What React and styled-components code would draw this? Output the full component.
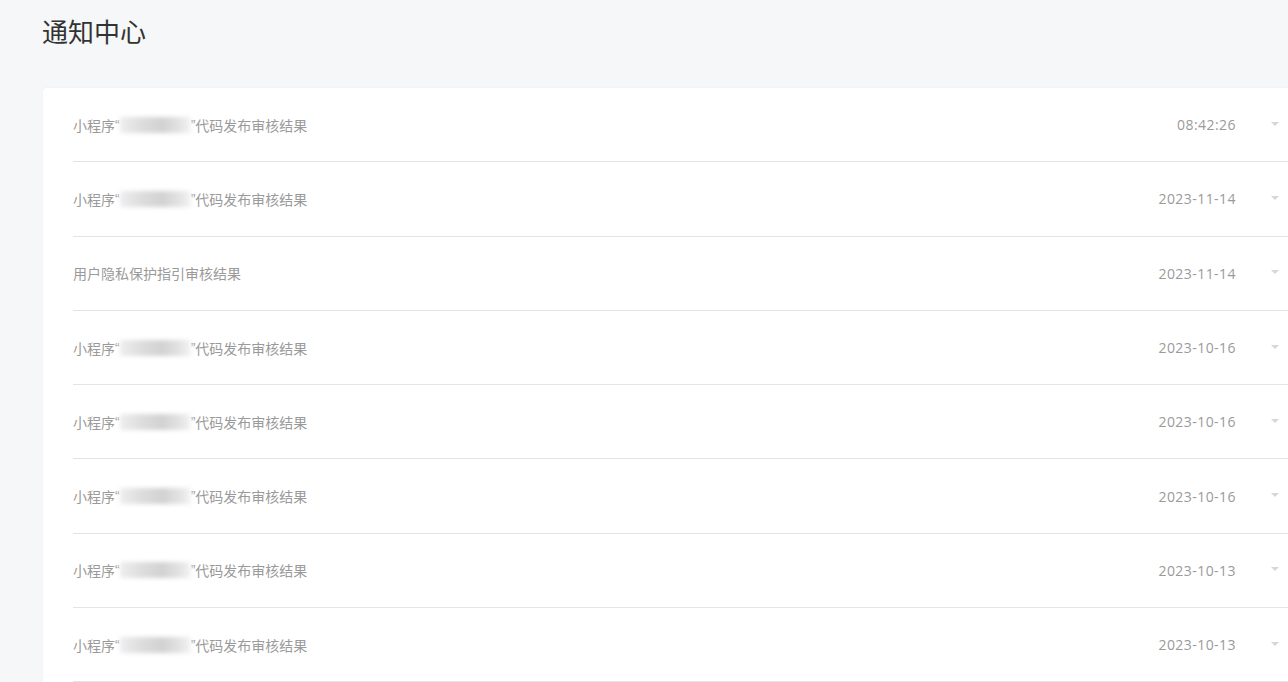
import React from 'react'
import styled, { createGlobalStyle } from 'styled-components'

const GlobalStyle = createGlobalStyle`
  html, body {
    margin: 0;
    padding: 0;
    background: #f6f7f9;
    overflow: hidden;
    font-family: "Noto Sans CJK SC", "Noto Sans", sans-serif;
  }
`

const Page = styled.div`
  padding: 15px 0 0 43px;
`

const Title = styled.h1`
  margin: 0 0 0 -1px;
  font-size: 26px;
  line-height: 32px;
  font-weight: 400;
  color: #333;
`

const Card = styled.div`
  margin-top: 41px;
  margin-right: -14px;
  background: #fff;
  border-radius: 4px 0 0 0;
  box-shadow: 0 0 3px rgba(0, 0, 0, 0.04);
  padding-left: 30px;
`

const Row = styled.div`
  display: flex;
  align-items: center;
  height: 73.3px;
  padding-right: 23px;
  border-bottom: 1px solid #e4e4e6;
  font-size: 14px;
  color: #9a9a9a;
`

const Subject = styled.div`
  flex: 1;
  display: flex;
  align-items: center;
`

const Quote = styled.span`
  font-family: "Liberation Sans", sans-serif;
`

const Blur = styled.span`
  display: inline-block;
  width: ${p => p.w}px;
  height: 16px;
  background: linear-gradient(90deg, #eee 0%, #ddd 30%, #d2d2d2 60%, #e4e4e4 85%, #f4f4f4 100%);
  filter: blur(2px);
`

const Time = styled.span`
  font-family: "Open Sans", "Noto Sans", sans-serif;
  letter-spacing: 0.45px;
  color: #9a9a9a;
`

const Caret = styled.span`
  width: 0;
  height: 0;
  margin-left: 35px;
  margin-top: -2px;
  border-left: 4px solid transparent;
  border-right: 4px solid transparent;
  border-top: 4px solid #d6d7dc;
`

const items = [
  { kind: 'code', time: '08:42:26' },
  { kind: 'code', time: '2023-11-14' },
  { kind: 'privacy', time: '2023-11-14' },
  { kind: 'code', time: '2023-10-16' },
  { kind: 'code', time: '2023-10-16' },
  { kind: 'code', time: '2023-10-16' },
  { kind: 'code', time: '2023-10-13' },
  { kind: 'code', time: '2023-10-13' },
]

const App = () => (
  <Page>
    <GlobalStyle />
    <Title>通知中心</Title>
    <Card>
      {items.map((item, i) => (
        <Row key={i}>
          <Subject>
            {item.kind === 'privacy' ? (
              '用户隐私保护指引审核结果'
            ) : (
              <>
                小程序<Quote>“</Quote><Blur w={71} /><Quote>”</Quote>代码发布审核结果
              </>
            )}
          </Subject>
          <Time>{item.time}</Time>
          <Caret />
        </Row>
      ))}
    </Card>
  </Page>
)

export default App
